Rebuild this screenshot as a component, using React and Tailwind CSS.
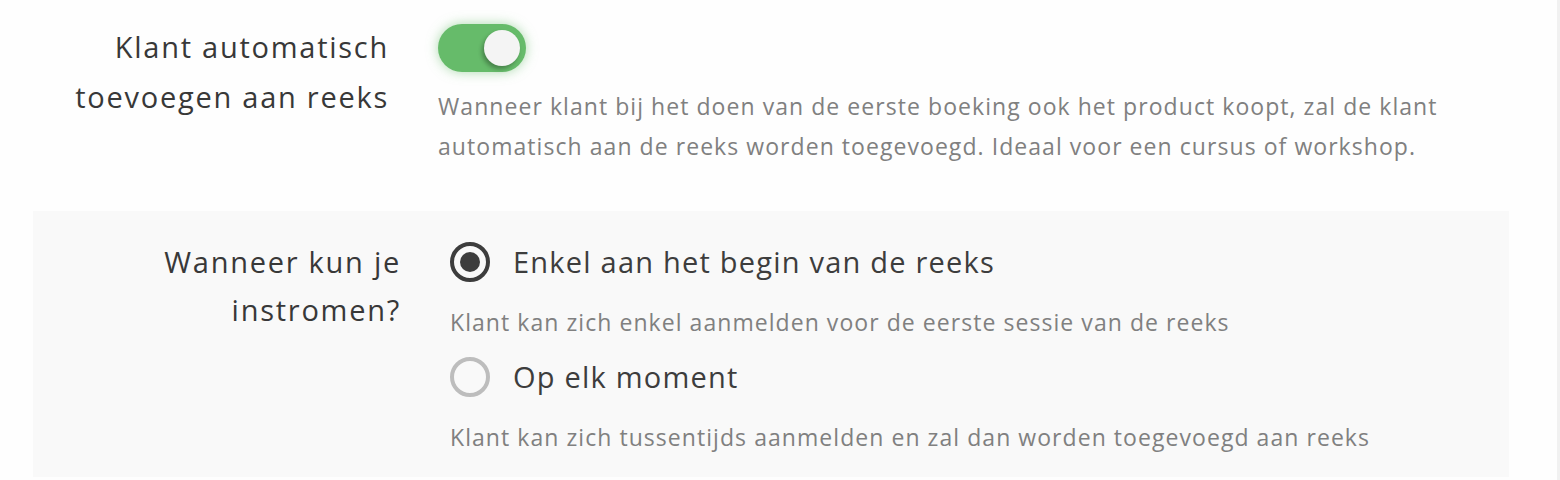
const font = { fontFamily: "'Open Sans', 'Noto Sans', sans-serif" }

function Toggle({ on }) {
  return (
    <div
      className={[
        'flex h-[48px] w-[88px] items-center rounded-full px-[6px]',
        on ? 'justify-end bg-[#66bb6a] shadow-[0_0_12px_rgba(102,187,106,0.55)]' : 'justify-start bg-[#cfcfcf]',
      ].join(' ')}
    >
      <div className="h-[36px] w-[36px] rounded-full bg-[#f4f4f4] shadow-[-2px_3px_4px_rgba(0,0,0,0.3)]" />
    </div>
  )
}

function Radio({ checked }) {
  return (
    <div
      className={[
        'flex h-[40px] w-[40px] shrink-0 items-center justify-center rounded-full border-[4px]',
        checked ? 'border-[#3d3d3d]' : 'border-[#bdbdbd]',
      ].join(' ')}
    >
      {checked && <div className="h-[20px] w-[20px] rounded-full bg-[#3d3d3d]" />}
    </div>
  )
}

const options = [
  {
    label: 'Enkel aan het begin van de reeks',
    hint: 'Klant kan zich enkel aanmelden voor de eerste sessie van de reeks',
    checked: true,
  },
  {
    label: 'Op elk moment',
    hint: 'Klant kan zich tussentijds aanmelden en zal dan worden toegevoegd aan reeks',
    checked: false,
  },
]

export default function App() {
  return (
    <div className="flex min-h-[480px] bg-[#fefefe] tracking-[0.066em]" style={font}>
      <div className="flex-1 pl-[21px] pr-[48px]">
        <div className="flex pt-[22px]">
          <div className="w-[368px] shrink-0 text-right text-[29px] font-medium leading-[50px] tracking-[0.06em] text-[#383838]">
            Klant automatisch
            <br />
            toevoegen aan reeks
          </div>
          <div className="ml-[49px] flex flex-col items-start pt-[2px]">
            <Toggle on />
            <p className="mt-[14px] text-[23px] leading-[40px] text-[#808080]">
              <span className="block whitespace-nowrap">
                Wanneer klant bij het doen van de eerste boeking ook het product koopt, zal de klant
              </span>
              <span className="block whitespace-nowrap">
                automatisch aan de reeks worden toegevoegd. Ideaal voor een cursus of workshop.
              </span>
            </p>
          </div>
        </div>

        <div className="ml-[12px] mt-[45px] flex bg-[#f9f9f9] pb-[20px] pt-[27px]">
          <div className="w-[368px] shrink-0 text-right text-[29px] font-medium leading-[48px] tracking-[0.06em] text-[#383838]">
            Wanneer kun je
            <br />
            instromen?
          </div>
          <div className="ml-[49px] flex flex-col">
            {options.map((o, i) => (
              <div key={o.label} className={i > 0 ? 'mt-[11px]' : ''}>
                <div className="flex h-[48px] items-center gap-[23px]">
                  <Radio checked={o.checked} />
                  <span className="text-[29px] tracking-[0.042em] text-[#3d3d3d]">{o.label}</span>
                </div>
                <div className="mt-[16px] whitespace-nowrap text-[23px] leading-[40px] text-[#808080]">{o.hint}</div>
              </div>
            ))}
          </div>
        </div>
      </div>
      <div className="w-[3px] bg-[#f1f1f1]" />
    </div>
  )
}
